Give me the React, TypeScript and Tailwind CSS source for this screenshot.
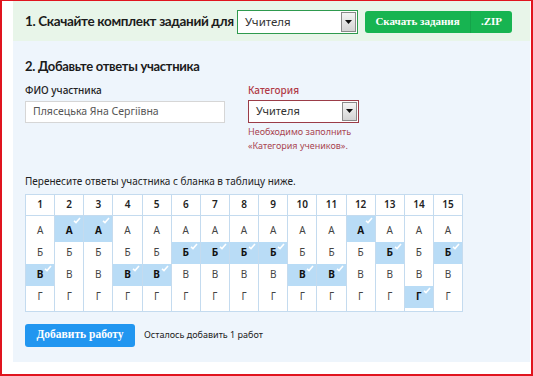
import React from 'react';

const letters = ['А', 'Б', 'В', 'Г'];
// index of the marked answer for each of the 15 questions
const marked = [2, 0, 0, 2, 2, 1, 1, 1, 1, 2, 2, 0, 1, 3, 1];

const Check = () => (
    <svg className="absolute top-[1px] right-[2px]" width="8" height="7" viewBox="0 0 8 7">
        <path d="M1 3.8 L3 5.6 L7 1" stroke="#ffffff" strokeWidth="1.6" fill="none" />
    </svg>
);

const Arrow = () => (
    <div className="w-[15px] h-full flex items-center justify-center border border-[#8a8a8a] bg-gradient-to-b from-[#f4f4f4] to-[#d4d4d4]">
        <svg width="7" height="4" viewBox="0 0 7 4">
            <path d="M0 0 L7 0 L3.5 4 Z" fill="#111" />
        </svg>
    </div>
);

export default function App() {
    return (
        <div
            className="w-[533px] h-[376px] bg-white border-l-2 border-t border-r-2 border-b-2 border-[#e0141e] pl-[11px] pr-px pb-[12px] flex flex-col"
            style={{ fontFamily: '"Noto Sans", "Open Sans", sans-serif' }}
        >
            <div className="h-[40px] shrink-0 bg-[#e8f5e9] flex items-center pl-[12px] pt-px">
                <h1 className="text-[13.5px] font-bold text-[#1b1b1b] w-[212px] whitespace-nowrap tracking-[-0.35px]" style={{ fontFamily: 'Lato, sans-serif' }}>
                    1. Скачайте комплект заданий для
                </h1>
                <div className="w-[121px] h-[24px] bg-white border border-[#2e9a4e] flex items-center justify-between pl-[7px] pr-px py-px">
                    <span className="text-[11.5px] text-[#333]">Учителя</span>
                    <Arrow />
                </div>
                <div className="ml-[7px] w-[147px] h-[22px] rounded-[3px] bg-[#17b451] flex items-center text-white font-bold text-[11px]" style={{ fontFamily: '"Liberation Serif", serif' }}>
                    <span className="w-[105px] text-center">Скачать задания</span>
                    <span className="h-full border-l border-[#15a34a] flex-1 flex items-center justify-center">.ZIP</span>
                </div>
            </div>
            <div className="flex-1 bg-[#eef5fc] pl-[12px] pt-[16px]">
                <h2 className="text-[13px] font-bold text-[#1b1b1b] tracking-[-0.3px]" style={{ fontFamily: 'Lato, sans-serif' }}>
                    2. Добавьте ответы участника
                </h2>
                <div className="flex mt-[7px] text-[10px]">
                    <div className="w-[223px]">
                        <div className="text-[#222] h-[12px] leading-[12px] font-medium">ФИО участника</div>
                        <div className="mt-[5px] w-[200px] h-[22px] bg-white border border-[#d6d6d6] flex items-center pl-[7px] text-[10.5px] text-[#555]">
                            Плясецька Яна Сергiївна
                        </div>
                    </div>
                    <div>
                        <div className="text-[#b03a46] h-[12px] leading-[12px] font-medium">Категория</div>
                        <div className="mt-[4px] w-[111px] h-[23px] bg-white border border-[#9b3c47] flex items-center justify-between pl-[7px] pr-px py-px">
                            <span className="text-[11px] text-[#333]">Учителя</span>
                            <Arrow />
                        </div>
                        <div className="mt-[2px] text-[9px] text-[#a94652] leading-[14px]">
                            Необходимо заполнить
                            <br />
                            «Категория учеников».
                        </div>
                    </div>
                </div>
                <p className="mt-[22px] text-[10px] text-[#222] leading-[12px]">
                    Перенесите ответы участника с бланка в таблицу ниже.
                </p>
                <div className="mt-[7px] w-[438px] flex border border-[#c4dbef] bg-white text-[10px]">
                    {marked.map((m, i) => (
                        <div key={i} className={'flex-1 flex flex-col ' + (i > 0 ? 'border-l border-[#c4dbef]' : '')}>
                            <div className="h-[21px] flex items-center justify-center border-b border-[#c4dbef] font-semibold text-[#222]">
                                {i + 1}
                            </div>
                            {letters.map((l, j) => (
                                <div
                                    key={j}
                                    className={
                                        'relative flex items-center justify-center ' +
                                        (j === 0 ? 'h-[26px] pt-[4px] ' : 'h-[22px] ') +
                                        (m === j ? 'bg-[#b9dcf6] font-bold text-[#111]' : 'text-[#444]')
                                    }
                                >
                                    {l}
                                    {m === j && <Check />}
                                </div>
                            ))}
                            <div className="h-[3px]" />
                        </div>
                    ))}
                </div>
                <div className="mt-[12px] flex items-center">
                    <button className="w-[110px] h-[23px] rounded-[3px] bg-[#2196f0] text-white font-bold text-[11.5px]" style={{ fontFamily: '"Liberation Serif", serif' }}>
                        Добавить работу
                    </button>
                    <span className="ml-[9px] text-[9px] text-[#222]">
                        Осталось добавить 1 работ
                    </span>
                </div>
            </div>
        </div>
    );
}
